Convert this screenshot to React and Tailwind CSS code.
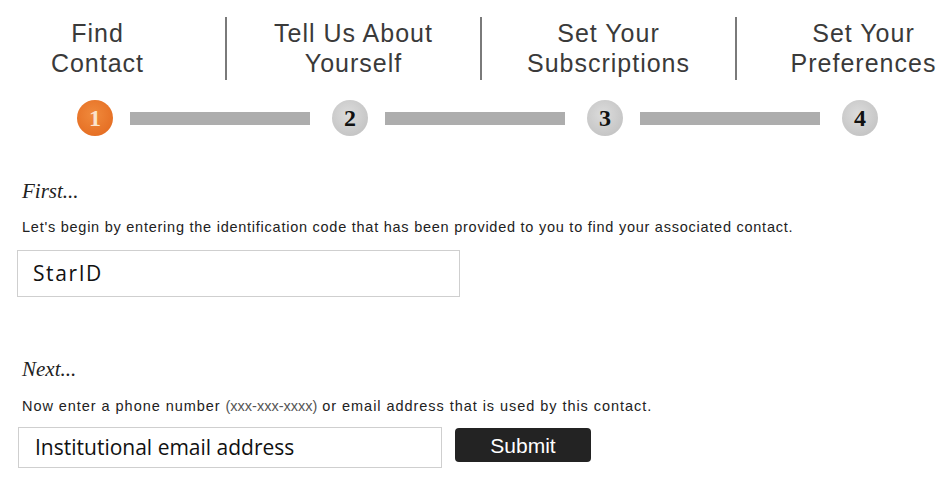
import React from 'react';

const steps = [
  { lines: ['Find', 'Contact'] },
  { lines: ['Tell Us About', 'Yourself'] },
  { lines: ['Set Your', 'Subscriptions'] },
  { lines: ['Set Your', 'Preferences'] },
];

const Circle = ({ n, active }) => (
  <div
    className={
      'w-[36px] h-[36px] rounded-full flex items-center justify-center shrink-0 ' +
      (active
        ? 'bg-[radial-gradient(circle_at_45%_40%,#f08a3c,#e2661c)] text-[#fbe3cc]'
        : 'bg-[radial-gradient(circle_at_45%_40%,#dcdcdc,#bdbdbd)] text-[#111]')
    }
    style={{ fontFamily: '"Liberation Serif", serif' }}
  >
    <span className="text-[24px] font-bold leading-none">{n}</span>
  </div>
);

const App = () => {
  return (
    <div className="w-[946px] h-[486px] bg-white overflow-hidden" style={{ fontFamily: '"Liberation Sans", Arial, sans-serif' }}>
      {/* Step titles */}
      <div className="flex -ml-[30px] pt-[17px]">
        {steps.map((s, i) => (
          <div
            key={i}
            className={'w-[255px] shrink-0 flex items-center justify-center h-[63px] ' + (i > 0 ? 'border-l-2 border-[#7a7a7a]' : '')}
          >
            <div className="text-center text-[25px] leading-[30px] tracking-[1px] text-[#3a3a3a] -mt-[1px]">
              {s.lines.map((l) => (
                <div key={l}>{l}</div>
              ))}
            </div>
          </div>
        ))}
      </div>

      {/* Progress */}
      <div className="flex items-center pl-[77px] mt-[20px]">
        <Circle n="1" active />
        <div className="w-[180px] h-[13px] bg-[#adadad] ml-[17px] mr-[22px]" />
        <Circle n="2" />
        <div className="w-[180px] h-[13px] bg-[#adadad] ml-[17px] mr-[22px]" />
        <Circle n="3" />
        <div className="w-[180px] h-[13px] bg-[#adadad] ml-[17px] mr-[22px]" />
        <Circle n="4" />
      </div>

      {/* First */}
      <div className="pl-[22px] mt-[43px]">
        <div className="text-[21px] italic text-[#222] leading-[24px]" style={{ fontFamily: '"Liberation Serif", serif' }}>
          First...
        </div>
        <p className="text-[14.5px] tracking-[0.75px] text-[#222] mt-[16px] leading-[17px]">
          Let's begin by entering the identification code that has been provided to you to find your associated contact.
        </p>
      </div>
      <div className="pl-[17px] mt-[14px]">
        <div
          className="w-[443px] h-[47px] border border-[#cfcfcf] flex items-center pl-[15px] text-[21px] tracking-[1.6px] text-[#111]"
          style={{ fontFamily: '"Open Sans", sans-serif' }}
        >
          StarID
        </div>
      </div>

      {/* Next */}
      <div className="pl-[22px] mt-[60px]">
        <div className="text-[21px] italic text-[#222] leading-[24px]" style={{ fontFamily: '"Liberation Serif", serif' }}>
          Next...
        </div>
        <p className="text-[14.5px] tracking-[0.95px] text-[#222] mt-[17px] leading-[17px]">
          Now enter a phone number <span className="text-[#555] tracking-[0px]">(xxx-xxx-xxxx)</span> or email address that is used by this contact.
        </p>
      </div>
      <div className="pl-[18px] mt-[12px] flex items-start gap-[13px]">
        <div
          className="w-[424px] h-[41px] border border-[#cfcfcf] flex items-center pl-[16px] text-[21px] text-[#111]"
          style={{ fontFamily: '"Open Sans", sans-serif' }}
        >
          Institutional email address
        </div>
        <button className="w-[136px] h-[34px] bg-[#232323] rounded-[4px] text-white text-[21px] leading-none mt-[1px]">
          Submit
        </button>
      </div>
    </div>
  );
};

export default App;
